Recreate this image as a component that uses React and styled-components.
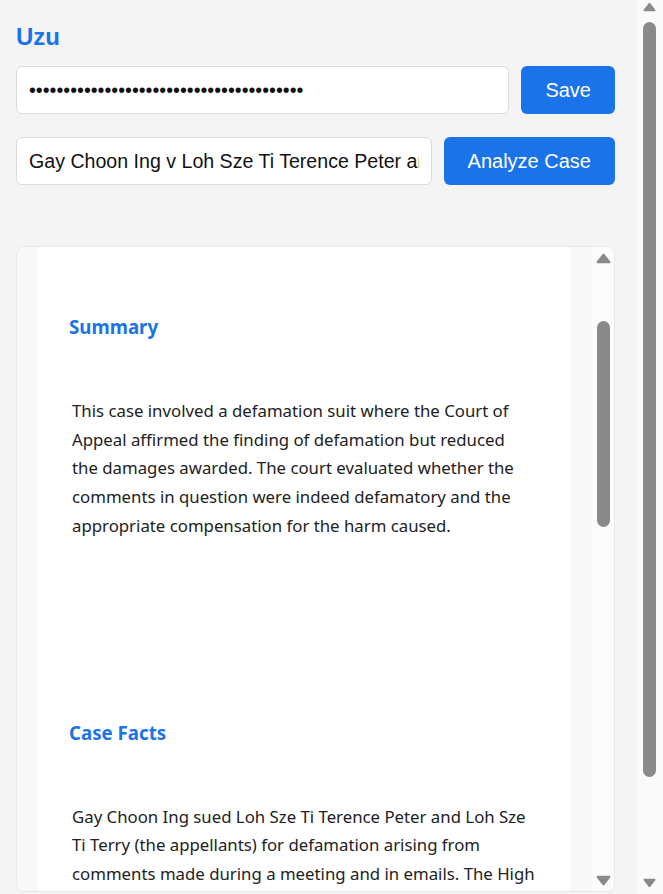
import React from "react";
import styled, { createGlobalStyle } from "styled-components";

const GlobalStyle = createGlobalStyle`
  html, body {
    margin: 0;
    padding: 0;
    background: #f4f4f4;
  }
  body {
    font-family: "Liberation Sans", Arial, sans-serif;
    color: #222;
  }
`;

const Shell = styled.div`
  display: flex;
  height: 100vh;
  overflow: hidden;
`;

const Main = styled.main`
  flex: 1;
  min-width: 0;
  padding: 23px 23px 0 16px;
`;

const Title = styled.h1`
  margin: 0 0 15px;
  font-size: 24px;
  line-height: 28px;
  font-weight: bold;
  color: #1a73e8;
`;

const Row = styled.div`
  display: flex;
  gap: 12px;
  margin-bottom: 23px;
`;

const TextInput = styled.input`
  flex: 1;
  min-width: 0;
  height: 48px;
  box-sizing: border-box;
  padding: 0 12px;
  border: 1px solid #dcdcdc;
  border-radius: 6px;
  background: #fff;
  font-family: "Liberation Sans", Arial, sans-serif;
  font-size: 19.6px;
  color: #111;
  outline: none;
`;

const Button = styled.button`
  flex: none;
  height: 48px;
  padding: 0 24px;
  border: none;
  border-radius: 6px;
  background: #1a73e8;
  color: #fff;
  font-family: "Liberation Sans", Arial, sans-serif;
  font-size: 20px;
  cursor: pointer;
`;

const Panel = styled.div`
  display: flex;
  margin-top: 61px;
  height: 646px;
  box-sizing: border-box;
  border: 1px solid #e8e8e8;
  border-radius: 8px;
  overflow: hidden;
`;

const PanelBody = styled.div`
  flex: 1;
  min-width: 0;
  padding: 0 22px 0 21px;
  background: #f8f8f8;
  overflow: hidden;
`;

const Content = styled.div`
  min-height: 100%;
  padding: 0 31px;
  background: #fff;
`;

const Section = styled.section`
  padding: 68px 0 112px;
`;

const Heading = styled.h2`
  margin: 0;
  font-family: "Noto Sans", "Open Sans", sans-serif;
  font-size: 18.7px;
  line-height: 24px;
  font-weight: bold;
  color: #1a73e8;
`;

const Para = styled.p`
  margin: 58px 0 0;
  padding-left: 3px;
  font-family: "Noto Sans", "Open Sans", sans-serif;
  font-size: 16.8px;
  line-height: 28.7px;
  color: #222;
  white-space: pre-line;
`;

/* scroll rails, drawn because the page shows the reference's scrollbars */
const Rail = styled.div`
  flex: none;
  width: ${(p) => p.$width}px;
  display: flex;
  flex-direction: column;
  align-items: center;
  box-sizing: border-box;
  padding: ${(p) => p.$pad};
  background: ${(p) => p.$bg};
`;

const Thumb = styled.div`
  width: 13px;
  flex: none;
  margin-top: ${(p) => p.$top}px;
  height: ${(p) => p.$height}px;
  border-radius: 7px;
  background: #8a8a8a;
`;

const ArrowBox = styled.svg`
  flex: none;
  display: block;
  &:last-child {
    margin-top: auto;
  }
`;

const Arrow = ({ down, w = 14, h = 10 }) => (
  <ArrowBox width={w} height={h} viewBox="0 0 14 10">
    <path
      d={down ? "M1.5 1.5 H12.5 L7 8.5 Z" : "M7 1.5 L12.5 8.5 H1.5 Z"}
      fill="#8a8a8a"
      stroke="#8a8a8a"
      strokeWidth="2"
      strokeLinejoin="round"
    />
  </ArrowBox>
);

const summary = [
  "This case involved a defamation suit where the Court of",
  "Appeal affirmed the finding of defamation but reduced",
  "the damages awarded. The court evaluated whether the",
  "comments in question were indeed defamatory and the",
  "appropriate compensation for the harm caused.",
].join("\n");

const facts = [
  "Gay Choon Ing sued Loh Sze Ti Terence Peter and Loh Sze",
  "Ti Terry (the appellants) for defamation arising from",
  "comments made during a meeting and in emails. The High",
  "Court found the comments defamatory and awarded",
  "damages.",
].join("\n");

export default function App() {
  return (
    <>
      <GlobalStyle />
      <Shell>
        <Main>
          <Title>Uzu</Title>
          <Row>
            <TextInput type="password" defaultValue={"x".repeat(40)} />
            <Button>Save</Button>
          </Row>
          <Row>
            <TextInput
              type="text"
              defaultValue="Gay Choon Ing v Loh Sze Ti Terence Peter and another"
            />
            <Button>Analyze Case</Button>
          </Row>
          <Panel>
            <PanelBody>
              <Content>
                <Section>
                  <Heading>Summary</Heading>
                  <Para>{summary}</Para>
                </Section>
                <Section>
                  <Heading>Case Facts</Heading>
                  <Para>{facts}</Para>
                </Section>
              </Content>
            </PanelBody>
            <Rail $width={22} $pad="6px 0 5px" $bg="#fcfcfc">
              <Arrow w={15} h={11} />
              <Thumb $top={57} $height={206} />
              <Arrow down w={15} h={11} />
            </Rail>
          </Panel>
        </Main>
        <Rail $width={25} $pad="2px 2px 6px 0" $bg="#fafafa">
          <Arrow w={13} h={10} />
          <Thumb $top={10} $height={755} />
          <Arrow down w={13} h={10} />
        </Rail>
      </Shell>
    </>
  );
}
